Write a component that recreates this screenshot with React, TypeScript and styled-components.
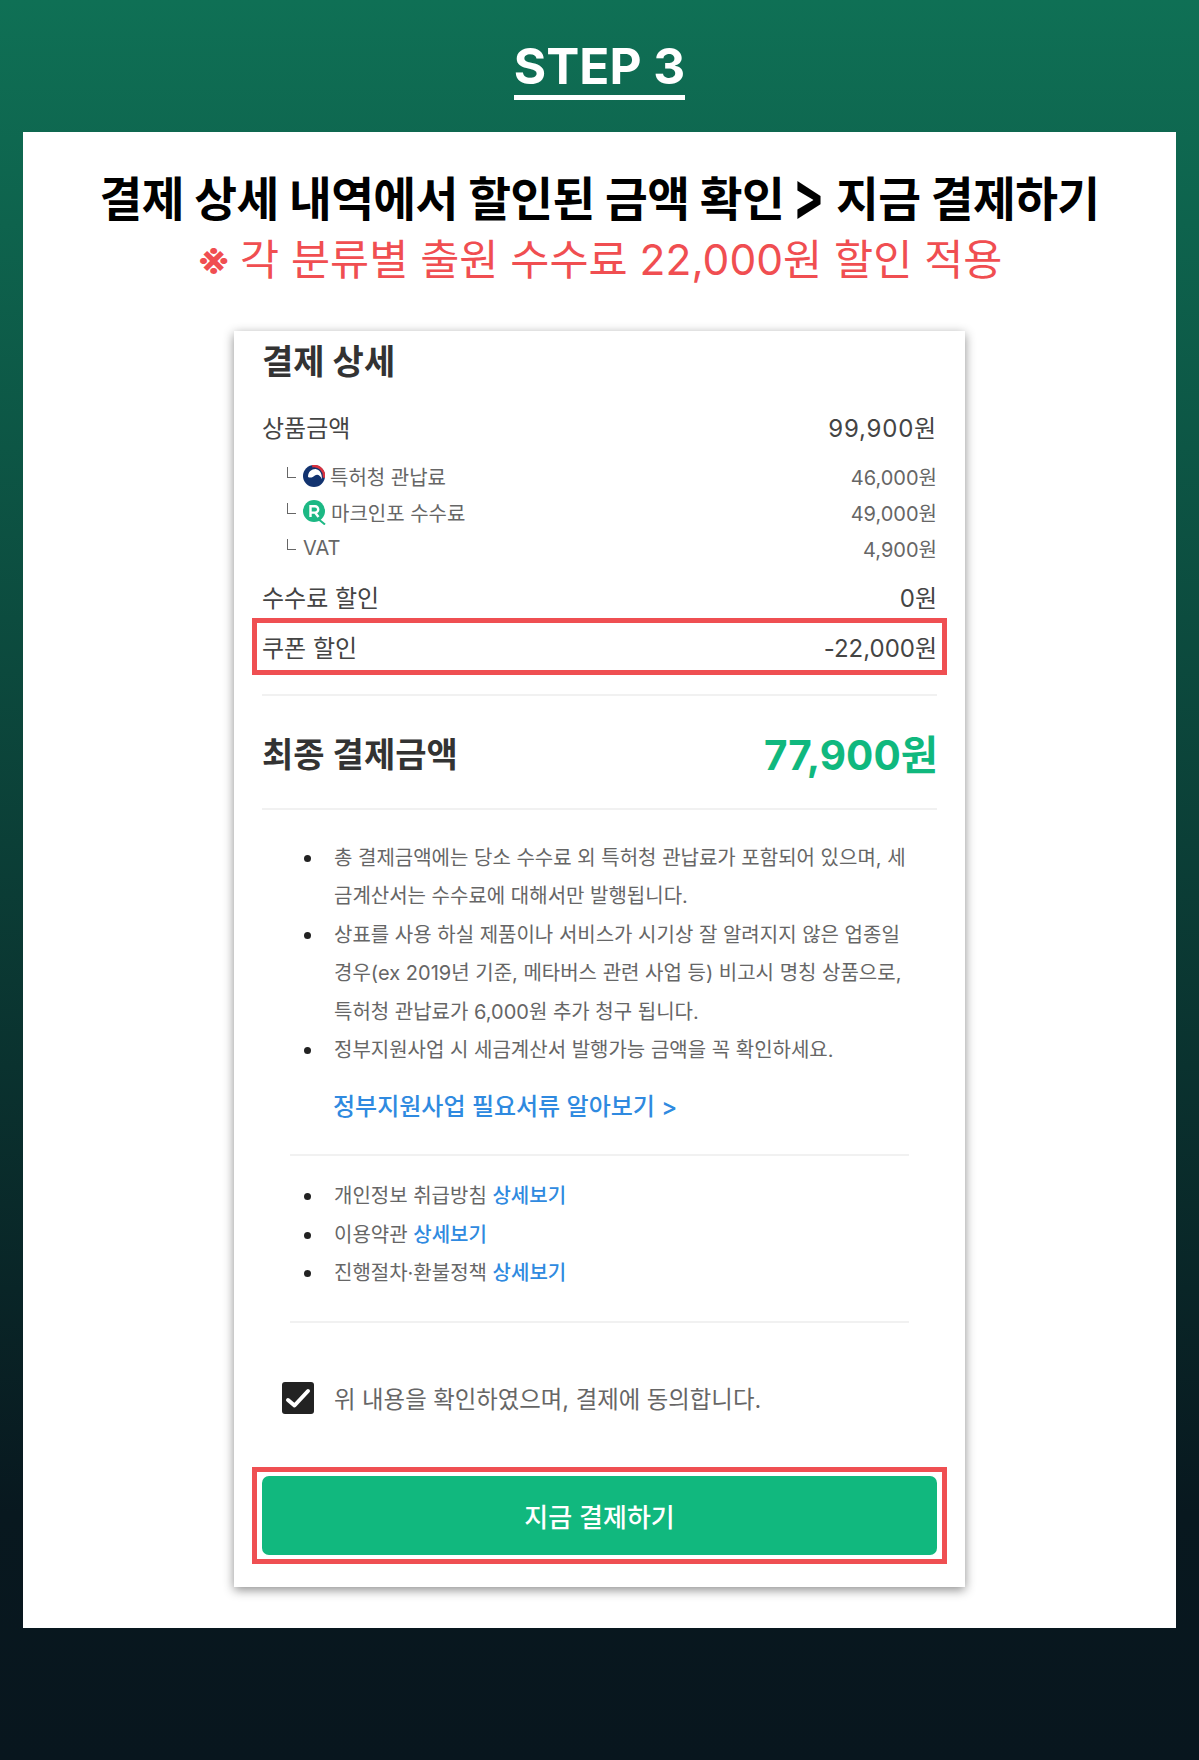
import React from "react";
import styled, { createGlobalStyle } from "styled-components";

const KR = `"Inter", "Noto Sans CJK KR", sans-serif`;

const GlobalStyle = createGlobalStyle`
	html, body { margin: 0; padding: 0; }
	body { font-family: "Inter", "Noto Sans CJK KR", sans-serif; }
	ul { margin: 0; padding: 0; }
`;

const Page = styled.div`
	width: 1199px;
	height: 1760px;
	padding: 0 23px;
	box-sizing: border-box;
	background: linear-gradient(180deg, #0f7055 0%, #08181f 86%, #08161e 100%);
`;
const StepHeader = styled.header`
	height: 132px;
	display: flex;
	justify-content: center;
	align-items: flex-start;
	padding-top: 36px;
	box-sizing: border-box;
`;
const StepTitle = styled.h1`
	margin: 0;
	height: 64px;
	color: #fff;
	font-family: "Inter", sans-serif;
	font-size: 49.5px;
	line-height: 60px;
	font-weight: 700;
	border-bottom: 5px solid #fff;
	box-sizing: border-box;
`;
const Panel = styled.section`
	height: 1496px;
	background: #fff;
	display: flex;
	flex-direction: column;
	align-items: center;
	padding-top: 36px;
	box-sizing: border-box;
`;
const Headline = styled.h2`
	margin: 0;
	font-family: ${KR};
	font-size: 46.5px;
	line-height: 62px;
	font-weight: 700;
	color: #000;
	white-space: nowrap;
	letter-spacing: -0.6px;
`;
const Chevron = styled.span`
	display: inline-block;
	font-weight: 700;
	margin: 0 2px 0 -2px;
	transform: translateY(-4px) scaleY(1.45);
`;
const SubHeadline = styled.p`
	margin: 0 0 41px;
	font-family: ${KR};
	font-size: 42.5px;
	line-height: 60px;
	font-weight: 400;
	color: #f04e51;
	white-space: nowrap;
`;
const Mark = styled.span`
	font-weight: 700;
	margin-right: -3px;
`;
const Card = styled.div`
	width: 731px;
	height: 1256px;
	box-sizing: border-box;
	padding: 0 28px;
	background: #fff;
	box-shadow: 0 3px 10px rgba(0, 0, 0, 0.45);
	color: #333;
	display: flex;
	flex-direction: column;
`;
const CardTitle = styled.h3`
	margin: 0;
	height: 62px;
	font-family: ${KR};
	font-size: 34px;
	line-height: 62px;
	font-weight: 700;
	color: #333;
`;
const Row = styled.div`
	display: flex;
	justify-content: space-between;
	align-items: center;
	height: 40px;
	font-size: 24px;
	color: #444;
`;
const TopRow = styled(Row)`
	margin-top: 13px;
	margin-bottom: 12px;
`;
const SubRow = styled(Row)`
	height: 36px;
	font-size: 20px;
	color: #666;
	padding-left: 25px;
`;
const SubLabel = styled.span`
	display: flex;
	align-items: center;
	gap: 5px;
`;
const Corner = styled.span`
	width: 9px;
	height: 11px;
	margin: 0 2px 8px 0;
	border-left: 1.5px solid #666;
	border-bottom: 1.5px solid #666;
	box-sizing: border-box;
`;
const Amount = styled.span`
	letter-spacing: 0.8px;
`;
const FeeRow = styled(Row)`
	margin-top: 10px;
`;
const CouponRow = styled(Row)`
	margin: 2px -10px 0;
	height: 57px;
	padding: 0 5px;
	border: 5px solid #ef4f52;
	box-sizing: border-box;
`;
const Divider = styled.hr<{ $top?: number }>`
	margin: ${(props) => props.$top ?? 0}px 0 0;
	border: 0;
	height: 2px;
	flex: none;
	background: #f1f1f1;
`;
const InnerDivider = styled(Divider)`
	margin-left: 28px;
	margin-right: 28px;
`;
const TotalRow = styled.div`
	display: flex;
	justify-content: space-between;
	align-items: center;
	height: 112px;
`;
const TotalLabel = styled.span`
	font-family: ${KR};
	font-size: 34px;
	font-weight: 700;
	color: #333;
`;
const TotalValue = styled.span`
	font-size: 40.5px;
	font-weight: 700;
	color: #10b87e;
	margin-right: -1px;
`;
const Notes = styled.ul<{ $top: number }>`
	padding: ${(props) => props.$top}px 0 0 42px;
	display: flex;
	flex-direction: column;
	list-style: none;
`;
const Note = styled.li`
	position: relative;
	padding-left: 30px;
	padding-right: 20px;
	font-size: 20px;
	line-height: 38.4px;
	color: #666;
	&::before {
		content: "";
		position: absolute;
		left: 0;
		top: 16px;
		width: 7px;
		height: 7px;
		border-radius: 50%;
		background: #222;
	}
`;
const GuideLink = styled.a`
	display: block;
	margin: 19px 0 0 71px;
	height: 38px;
	line-height: 38px;
	font-size: 24px;
	font-weight: 500;
	color: #2f8ae0;
`;
const Blue = styled.span`
	color: #2f8ae0;
	font-weight: 500;
`;
const AgreeRow = styled.label`
	display: flex;
	align-items: center;
	gap: 20px;
	margin: 58px 0 0 20px;
	font-size: 23.4px;
	color: #666;
`;
const Checkbox = styled.span`
	width: 32px;
	height: 32px;
	border-radius: 3px;
	background: #222;
	display: flex;
`;
const ButtonFrame = styled.div`
	margin: 52px -10px 0;
	height: 97px;
	border: 5px solid #ef4f52;
	padding: 4px 5px;
	box-sizing: border-box;
`;
const PayButton = styled.button`
	width: 100%;
	height: 79px;
	border: 0;
	border-radius: 7px;
	background: #11b87e;
	color: #fff;
	font-family: ${KR};
	font-size: 26px;
	font-weight: 500;
	display: block;
`;

function GovLogo() {
	return (
		<svg width="22" height="22" viewBox="0 0 24 24">
			<circle cx="12" cy="12" r="12" fill="#12336f" />
			<path d="M5.500 13C5.500 7 10 4 14.500 4.500C19 5.500 21 10 20.500 15.500C19 11 15.500 9.500 13 11.500C11 13.500 7.500 14.500 5.500 13z" fill="#fff" />
			<path d="M10 1.300A11 11 0 0 1 22.800 14" fill="none" stroke="#d8323f" strokeWidth="2.800" />
		</svg>
	);
}

function MarkinfoLogo() {
	return (
		<svg width="23" height="25" viewBox="0 0 23 25">
			<circle cx="11" cy="11" r="11" fill="#1cb884" />
			<path d="M14 18l8 6.500" stroke="#1cb884" strokeWidth="2" />
			<path d="M7.500 17V6.200h4.500a3.200 3.200 0 0 1 0 6.400H7.500M12 12.500l3.500 4.500" fill="none" stroke="#fff" strokeWidth="2.400" />
		</svg>
	);
}

export default function App() {
	return (
		<Page>
			<GlobalStyle />
			<StepHeader>
				<StepTitle>STEP 3</StepTitle>
			</StepHeader>
			<Panel>
				<Headline>결제 상세 내역에서 할인된 금액 확인 <Chevron>&gt;</Chevron> 지금 결제하기</Headline>
				<SubHeadline><Mark>※</Mark> 각 분류별 출원 수수료 22,000원 할인 적용</SubHeadline>
				<Card>
					<CardTitle>결제 상세</CardTitle>
					<TopRow>
						<span>상품금액</span>
						<Amount>99,900원</Amount>
					</TopRow>
					<SubRow>
						<SubLabel><Corner /><GovLogo />특허청 관납료</SubLabel>
						<span>46,000원</span>
					</SubRow>
					<SubRow>
						<SubLabel><Corner /><MarkinfoLogo />마크인포 수수료</SubLabel>
						<span>49,000원</span>
					</SubRow>
					<SubRow>
						<SubLabel><Corner />VAT</SubLabel>
						<span>4,900원</span>
					</SubRow>
					<FeeRow>
						<span>수수료 할인</span>
						<span>0원</span>
					</FeeRow>
					<CouponRow>
						<span>쿠폰 할인</span>
						<span>-22,000원</span>
					</CouponRow>
					<Divider $top={19} />
					<TotalRow>
						<TotalLabel>최종 결제금액</TotalLabel>
						<TotalValue>77,900원</TotalValue>
					</TotalRow>
					<Divider />
					<Notes $top={29}>
						<Note>총 결제금액에는 당소 수수료 외 특허청 관납료가 포함되어 있으며, 세금계산서는 수수료에 대해서만 발행됩니다.</Note>
						<Note>상표를 사용 하실 제품이나 서비스가 시기상 잘 알려지지 않은 업종일 경우(ex 2019년 기준, 메타버스 관련 사업 등) 비고시 명칭 상품으로, 특허청 관납료가 6,000원 추가 청구 됩니다.</Note>
						<Note>정부지원사업 시 세금계산서 발행가능 금액을 꼭 확인하세요.</Note>
					</Notes>
					<GuideLink>정부지원사업 필요서류 알아보기 &gt;</GuideLink>
					<InnerDivider $top={28} />
					<Notes $top={21}>
						<Note>개인정보 취급방침 <Blue>상세보기</Blue></Note>
						<Note>이용약관 <Blue>상세보기</Blue></Note>
						<Note>진행절차·환불정책 <Blue>상세보기</Blue></Note>
					</Notes>
					<InnerDivider $top={28} />
					<AgreeRow>
						<Checkbox>
							<svg width="32" height="32" viewBox="0 0 32 32" fill="none">
								<path d="M6 18l6.500 5.500L26 9" stroke="#fff" strokeWidth="4" strokeLinecap="round" strokeLinejoin="round" />
							</svg>
						</Checkbox>
						위 내용을 확인하였으며, 결제에 동의합니다.
					</AgreeRow>
					<ButtonFrame>
						<PayButton>지금 결제하기</PayButton>
					</ButtonFrame>
				</Card>
			</Panel>
		</Page>
	);
}
